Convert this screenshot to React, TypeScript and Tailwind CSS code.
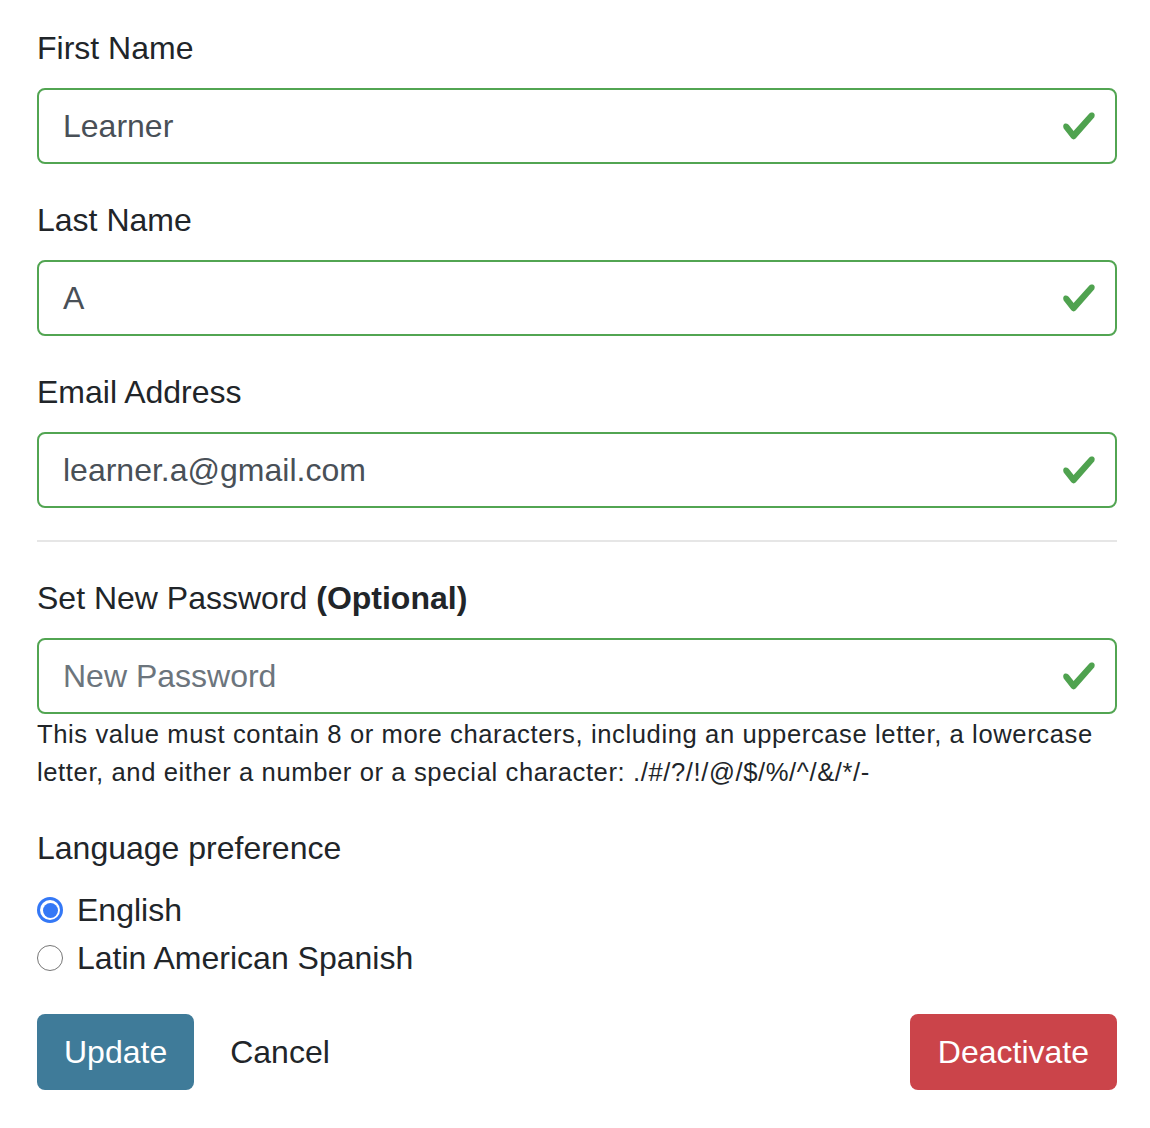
import React from 'react';

const font = { fontFamily: '"Liberation Sans", Arial, sans-serif' };

const Check = () => (
  <svg className="w-[36px] h-[36px]" viewBox="0 0 8 8" aria-hidden>
    <path
      fill="#4fa24f"
      d="M2.3 6.73L.6 4.53c-.4-1.04.46-1.4 1.1-.8l1.1 1.4 3.4-3.8c.6-.63 1.6-.27 1.2.7l-4 4.6c-.43.5-.8.4-1.1.1z"
    />
  </svg>
);

const Field = ({ label, value, placeholder }: { label: React.ReactNode; value?: string; placeholder?: string }) => (
  <div>
    <label className="block text-[32px] leading-[48px] text-[#212529] mb-[16px]">{label}</label>
    <div className="h-[76px] rounded-[8px] border-2 border-[#52a552] flex items-center pl-[24px] pr-[18px]">
      <span className={`flex-1 text-[32px] ${value ? 'text-[#495057]' : 'text-[#6c757d]'}`}>
        {value || placeholder}
      </span>
      <Check />
    </div>
  </div>
);

const Radio = ({ checked, label }: { checked?: boolean; label: string }) => (
  <div className="flex items-center h-[48px]">
    {checked ? (
      <span className="w-[26px] h-[26px] rounded-full bg-[#3478f6] flex items-center justify-center">
        <span className="w-[20px] h-[20px] rounded-full bg-white flex items-center justify-center">
          <span className="w-[15px] h-[15px] rounded-full bg-[#3478f6]" />
        </span>
      </span>
    ) : (
      <span className="w-[26px] h-[26px] rounded-full border-[1.5px] border-[#767676] bg-white" />
    )}
    <span className="ml-[14px] text-[32px] text-[#212529]">{label}</span>
  </div>
);

export default function App() {
  return (
    <div className="bg-white min-h-[1128px] pl-[37px] pr-[33px] pt-[24px]" style={font}>
      <div className="flex flex-col gap-[32px]">
        <Field label="First Name" value="Learner" />
        <Field label="Last Name" value="A" />
        <Field label="Email Address" value="learner.a@gmail.com" />
      </div>

      <hr className="mt-[32px] mb-[32px] border-0 h-[2px] bg-[#e6e6e6]" />

      <Field
        label={
          <>
            Set New Password <strong className="font-bold">(Optional)</strong>
          </>
        }
        placeholder="New Password"
      />
      <p className="mt-[1px] text-[25.6px] leading-[38px] tracking-[0.6px] text-[#212529] pr-[20px]">
        This value must contain 8 or more characters, including an uppercase letter, a lowercase letter, and either
        a number or a special character: ./#/?/!/@/$/%/^/&amp;/*/-
      </p>

      <div className="mt-[33px]">
        <div className="text-[32px] leading-[48px] text-[#212529] mb-[14px]">Language preference</div>
        <Radio checked label="English" />
        <Radio label="Latin American Spanish" />
      </div>

      <div className="mt-[32px] flex items-center">
        <button className="h-[76px] px-[27px] rounded-[8px] bg-[#3f7b99] text-white text-[32px]">Update</button>
        <button className="h-[76px] ml-[12px] px-[24px] text-[32px] text-[#212529]">Cancel</button>
        <button className="ml-auto h-[76px] px-[28px] rounded-[8px] bg-[#cb444a] text-white text-[32px]">
          Deactivate
        </button>
      </div>
    </div>
  );
}
